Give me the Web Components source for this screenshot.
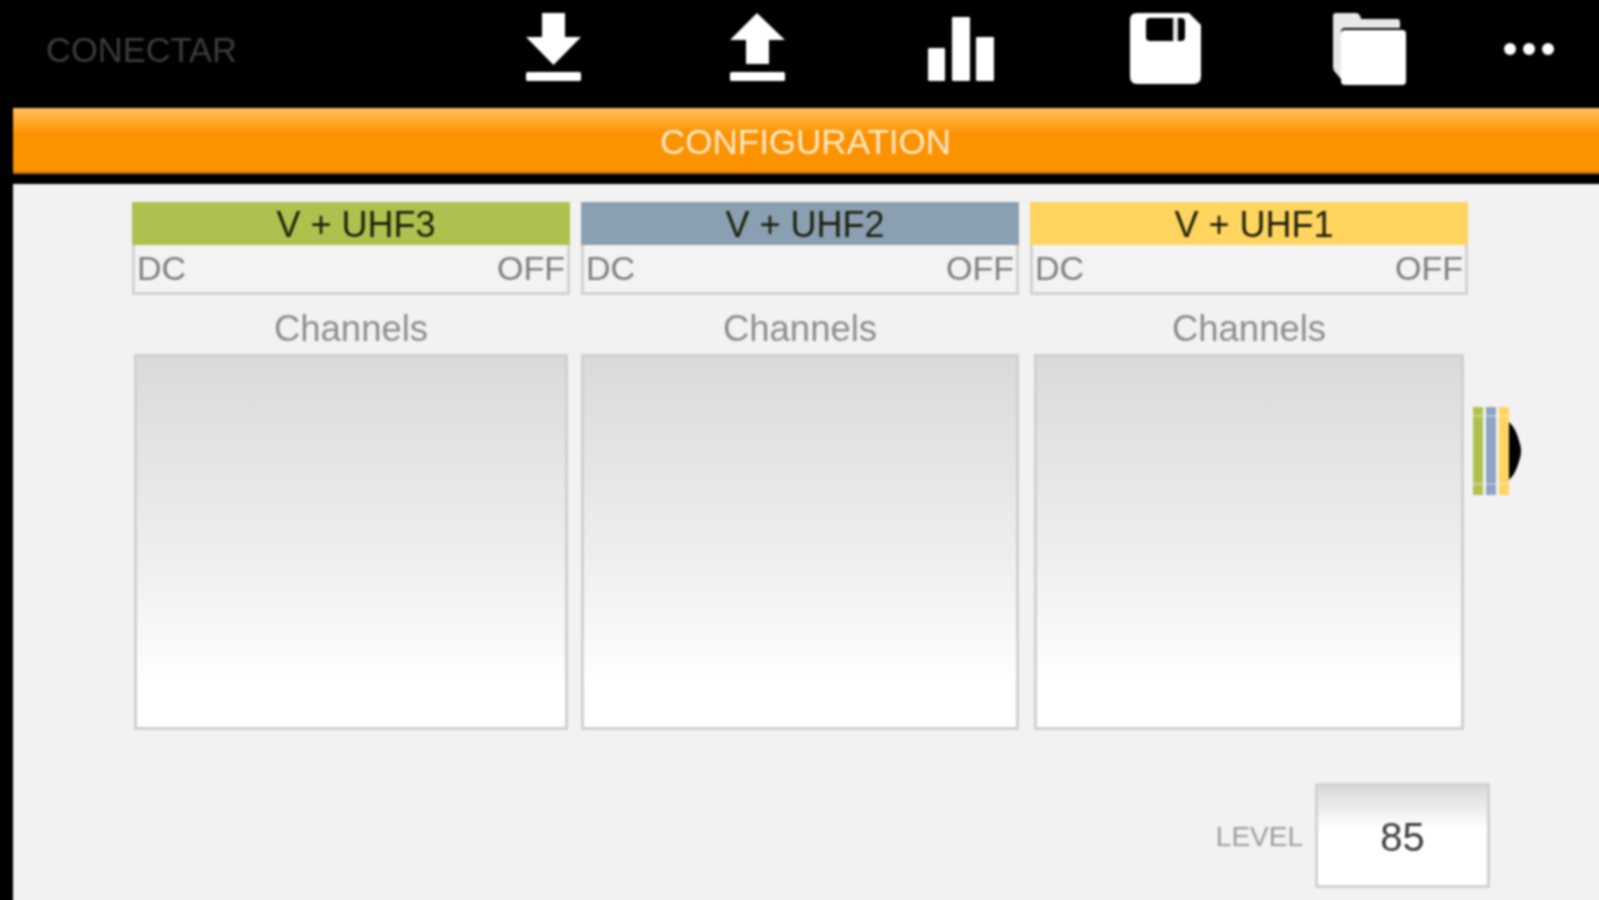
<!DOCTYPE html>
<html>
<head>
<meta charset="utf-8">
<title>Configuration</title>
<style>
    html, body { margin: 0; background: #000; overflow: hidden; }
</style>
</head>
<body>
<app-shell>
    <top-bar slot="top">
        <span slot="label">CONECTAR</span>
        <bar-icon name="download"></bar-icon>
        <bar-icon name="upload"></bar-icon>
        <bar-icon name="chart"></bar-icon>
        <bar-icon name="save"></bar-icon>
        <bar-icon name="folder"></bar-icon>
        <bar-icon name="more"></bar-icon>
    </top-bar>
    <title-bar slot="title">CONFIGURATION</title-bar>
    <channel-column color="#aec14f" inset="2px">V + UHF3</channel-column>
    <channel-column color="#8a9fb1" inset="0px">V + UHF2</channel-column>
    <channel-column color="#ffd45f" inset="4px">V + UHF1</channel-column>
    <side-handle slot="handle"></side-handle>
    <level-input slot="level" value="85">LEVEL</level-input>
</app-shell>

<script>
const icons = {
    download: `<path d="M17 1H40V25H56L28.500 53 1 25H17Z"/><rect x="1" y="60" width="55" height="9" rx="1.500"/>`,
    upload: `<path d="M28 1 56 28H40V52H17V28H1Z"/><rect x="1" y="60" width="55" height="9" rx="1.500"/>`,
    chart: `<rect x="1" y="36" width="17" height="33" rx="1"/><rect x="25" y="5" width="18" height="64" rx="1"/><rect x="49" y="25" width="18" height="44" rx="1"/>`,
    save: `<path fill-rule="evenodd" d="M8 1H60L72 13V64Q72 72 64 72H8Q1 72 1 64V8Q1 1 8 1ZM21 6Q17 6 17 10V25Q17 29 21 29H52Q56 29 56 25V10Q56 6 52 6Z"/><rect x="44" y="6" width="5" height="23" fill="#e4e4e4"/>`,
    folder: `<path fill="#e8e8e8" d="M4 1H24Q28 1 29 7H65Q68 7 68 10V16H13Q9 16 9 20V67L3 60Q1 58 1 55V4Q1 1 4 1Z"/><rect x="9" y="18" width="65" height="55" rx="4"/>`,
    more: `<circle cx="6" cy="37" r="6"/><circle cx="25" cy="37" r="6"/><circle cx="44" cy="37" r="6"/>`
};

const iconSizes = {
    download: [57, 70],
    upload: [57, 70],
    chart: [68, 70],
    save: [73, 73],
    folder: [75, 74],
    more: [52, 70]
};

class BarIcon extends HTMLElement {
    constructor() {
        super();
        this.attachShadow({mode: 'open'});
    }

    connectedCallback() {
        const name = this.getAttribute('name');
        const size = iconSizes[name];
        this.shadowRoot.innerHTML = `
            <style>
                :host { display: flex; justify-content: center; }
                svg { display: block; fill: #fff; }
            </style>
            <svg width="${size[0]}" height="${size[1]}" viewBox="0 0 ${size[0]} ${size[1]}">${icons[name]}</svg>
        `;
    }
}

class TopBar extends HTMLElement {
    constructor() {
        super();
        this.attachShadow({mode: 'open'}).innerHTML = `
            <style>
                :host {
                    display: grid;
                    grid-template-columns: 405px repeat(5, 204px) 118px;
                    align-items: start;
                    height: 108px;
                    padding: 12px 0 0 46px;
                    box-sizing: border-box;
                    background: #000;
                }
                .label {
                    font: 34.500px/50px "Liberation Sans", Arial, sans-serif;
                    color: #3c3c3c;
                    margin-top: 13px;
                }
            </style>
            <div class="label"><slot name="label"></slot></div>
            <slot></slot>
        `;
    }
}

class TitleBar extends HTMLElement {
    constructor() {
        super();
        this.attachShadow({mode: 'open'}).innerHTML = `
            <style>
                :host {
                    display: block;
                    height: 66px;
                    margin-left: 13px;
                    padding-right: 22px;
                    background: linear-gradient(#ffc062 0, #ffa928 14px, #fb9200 26px, #fb9200 63px, #a86200 66px);
                    color: #ffe9c8;
                    font: 35px/68px "Liberation Sans", Arial, sans-serif;
                    text-align: center;
                }
            </style>
            <slot></slot>
        `;
    }
}

class ChannelColumn extends HTMLElement {
    constructor() {
        super();
        this.attachShadow({mode: 'open'});
    }

    connectedCallback() {
        this.shadowRoot.innerHTML = `
            <style>
                :host {
                    display: block;
                    font-family: "Liberation Sans", Arial, sans-serif;
                }
                .card {
                    height: 93px;
                    box-sizing: border-box;
                    border: solid #d2d2d2;
                    border-width: 0 3px 3px;
                    background: #f3f3f3;
                }
                .head {
                    margin: 0 -3px;
                    height: 43px;
                    padding-left: 10px;
                    background: ${this.getAttribute('color')};
                    color: #1d200b;
                    font-size: 36px;
                    line-height: 45px;
                    text-align: center;
                }
                .state {
                    display: flex;
                    justify-content: space-between;
                    padding: 0 2px 0 2px;
                    color: #7e7e7e;
                    font-size: 34px;
                    line-height: 47px;
                }
                .caption {
                    height: 59px;
                    color: #8e8e8e;
                    font-size: 36.500px;
                    line-height: 68px;
                    text-align: center;
                }
                .box {
                    height: 376px;
                    margin: 0 ${this.getAttribute('inset')};
                    box-sizing: border-box;
                    border: 3px solid #d0d0d0;
                    background: linear-gradient(#dadada, #efefef 55%, #ffffff 88%);
                }
            </style>
            <div class="card">
                <div class="head"><slot></slot></div>
                <div class="state"><span>DC</span><span>OFF</span></div>
            </div>
            <div class="caption">Channels</div>
            <div class="box"></div>
        `;
    }
}

class SideHandle extends HTMLElement {
    constructor() {
        super();
        this.attachShadow({mode: 'open'}).innerHTML = `
            <style>
                :host {
                    display: flex;
                    align-items: center;
                    gap: 3px;
                    height: 88px;
                    margin: 205px 0 0 5px;
                }
                i {
                    display: block;
                    width: 10px;
                    height: 100%;
                    background:
                        linear-gradient(rgba(255,255,255,.35), rgba(255,255,255,.35)) 0 8px / 100% 2px no-repeat,
                        linear-gradient(rgba(255,255,255,.35), rgba(255,255,255,.35)) 0 76px / 100% 2px no-repeat,
                        var(--stripe);
                }
                svg { display: block; margin-left: -3px; }
            </style>
            <i style="--stripe:#aec14f"></i>
            <i style="--stripe:#8fa3c4"></i>
            <i style="--stripe:#ffd45f"></i>
            <svg width="13" height="62" viewBox="0 0 13 62"><path d="M0 2Q7 8 11 24 13 31 11 38 7 54 0 60Z"/></svg>
        `;
    }
}

class LevelInput extends HTMLElement {
    constructor() {
        super();
        this.attachShadow({mode: 'open'});
    }

    connectedCallback() {
        this.shadowRoot.innerHTML = `
            <style>
                :host {
                    display: flex;
                    justify-content: flex-end;
                    align-items: center;
                    gap: 12px;
                    padding-right: 130px;
                    font-family: "Liberation Sans", Arial, sans-serif;
                }
                .label { color: #9c9c9c; font-size: 28px; margin-top: 2px; }
                .field {
                    width: 175px;
                    height: 105px;
                    box-sizing: border-box;
                    border: 3px solid #d2d2d2;
                    background: linear-gradient(#d8d8d8, #f6f6f6 32%, #ffffff 45%);
                    color: #3e3e3e;
                    font-size: 40px;
                    line-height: 102px;
                    text-align: center;
                }
            </style>
            <div class="label"><slot></slot></div>
            <div class="field">${this.getAttribute('value')}</div>
        `;
    }
}

class AppShell extends HTMLElement {
    constructor() {
        super();
        // a little wider and taller than the window so the blur has no dark edge
        this.attachShadow({mode: 'open'}).innerHTML = `
            <style>
                :host {
                    display: block;
                    width: 1620px;
                    height: 930px;
                    overflow: hidden;
                    background: #000;
                    filter: blur(0.9px);
                }
                main {
                    margin: 10px 0 0 13px;
                    height: 760px;
                    padding: 18px 0 0 119px;
                    box-sizing: border-box;
                    background: #f2f2f2;
                }
                .row { display: flex; }
                .columns {
                    display: grid;
                    grid-template-columns: repeat(3, 438px);
                    column-gap: 11px;
                }
                .level { margin-top: 53px; }
            </style>
            <slot name="top"></slot>
            <slot name="title"></slot>
            <main>
                <div class="row">
                    <div class="columns"><slot></slot></div>
                    <slot name="handle"></slot>
                </div>
                <div class="level"><slot name="level"></slot></div>
            </main>
        `;
    }
}

window.customElements.define('bar-icon', BarIcon);
window.customElements.define('top-bar', TopBar);
window.customElements.define('title-bar', TitleBar);
window.customElements.define('channel-column', ChannelColumn);
window.customElements.define('side-handle', SideHandle);
window.customElements.define('level-input', LevelInput);
window.customElements.define('app-shell', AppShell);
</script>
</body>
</html>
